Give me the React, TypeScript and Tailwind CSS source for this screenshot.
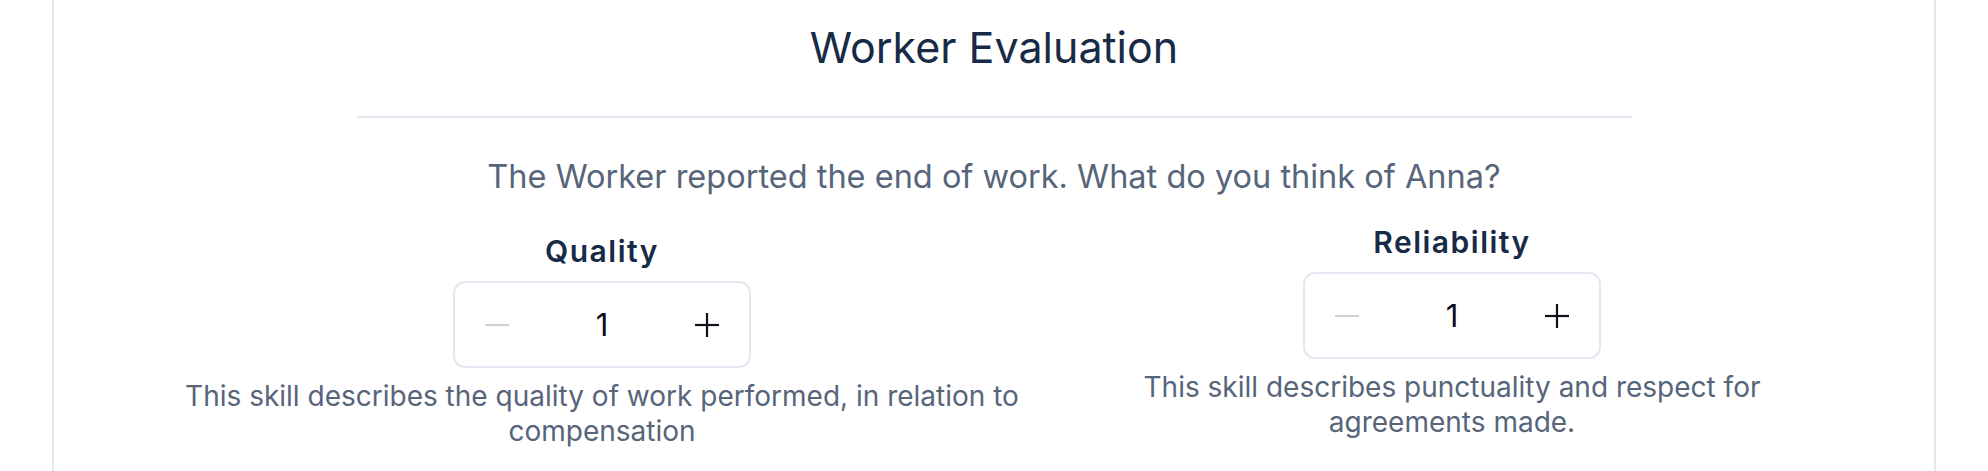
import React from "react";

const Stepper = ({ value }: { value: number }) => {
  return (
    <div className="flex items-center w-[298px] h-[87px] border-2 border-[#e3e7f0] rounded-[12px] px-[18px] bg-white">
      <button className="w-[48px] h-full flex items-center justify-center" aria-label="decrease">
        <svg width="24" height="24" viewBox="0 0 24 24">
          <line x1="0" y1="12" x2="24" y2="12" stroke="#cfd1d6" strokeWidth="2.2" />
        </svg>
      </button>
      <div className="flex-1 text-center text-[31px] leading-none text-[#0b0c16]">{value}</div>
      <button className="w-[48px] h-full flex items-center justify-center" aria-label="increase">
        <svg width="24" height="24" viewBox="0 0 24 24">
          <line x1="0" y1="12" x2="24" y2="12" stroke="#111219" strokeWidth="2.2" />
          <line x1="12" y1="0" x2="12" y2="24" stroke="#111219" strokeWidth="2.2" />
        </svg>
      </button>
    </div>
  );
};

const SkillColumn = ({
  title,
  lines,
  className,
}: {
  title: string;
  lines: string[];
  className?: string;
}) => {
  return (
    <div className={`flex flex-col items-center w-[850px] ${className ?? ""}`}>
      <p className="text-[30px] leading-[36px] font-semibold tracking-[1.5px] text-[#172a46]">{title}</p>
      <div className="mt-[12px]">
        <Stepper value={1} />
      </div>
      <p className="mt-[11px] text-[28px] leading-[35px] text-center text-[#56657a]">
        {lines.map((l, i) => (
          <React.Fragment key={i}>
            {l}
            {i < lines.length - 1 && <br />}
          </React.Fragment>
        ))}
      </p>
    </div>
  );
};

export default function App() {
  return (
    <div
      className="w-full h-[471px] bg-white overflow-hidden"
      style={{ fontFamily: "Inter, 'Noto Sans', sans-serif" }}
    >
      <div className="mx-[52px] h-full border-x-2 border-[#e4e7f0] flex flex-col items-center">
        <h1 className="pt-[21px] text-[43px] leading-[52px] font-normal text-[#172a46]">
          Worker Evaluation
        </h1>
        <div className="mt-[43px] w-[1275px] h-[2px] bg-[#e4e7f0]" />
        <p className="mt-[39px] text-[32.5px] leading-[40px] text-[#56657a]">
          The Worker reported the end of work. What do you think of Anna?
        </p>
        <div className="mt-[27px] w-full flex items-start pl-[123px]">
          <SkillColumn
            className="mt-[9px]"
            title="Quality"
            lines={["This skill describes the quality of work performed, in relation to", "compensation"]}
          />
          <SkillColumn
            title="Reliability"
            lines={["This skill describes punctuality and respect for", "agreements made."]}
          />
        </div>
      </div>
    </div>
  );
}
